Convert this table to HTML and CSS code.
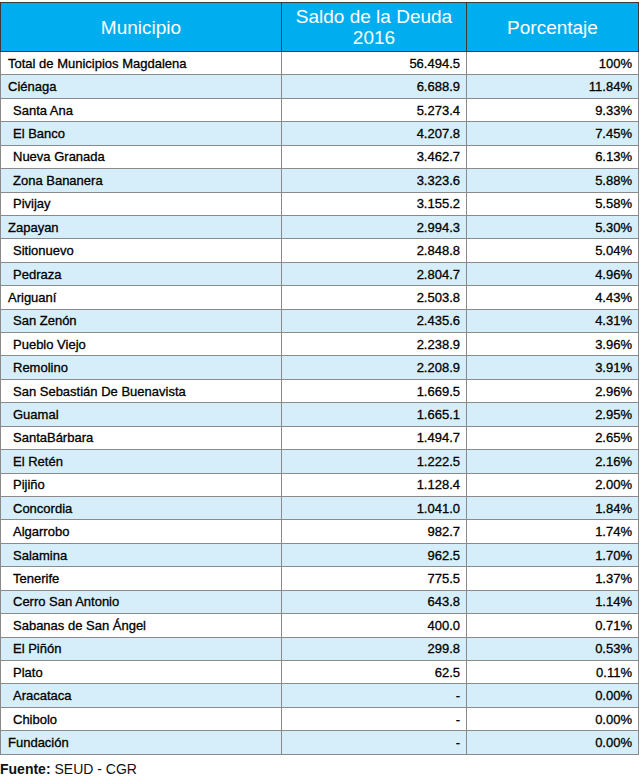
FILE: index.html
```html
<!DOCTYPE html>
<html lang="es">
<head>
<meta charset="utf-8">
<title>Saldo de la Deuda 2016 - Magdalena</title>
<link rel="stylesheet" href="styles.css">
</head>
<body>
<table class="deuda">
  <colgroup>
    <col class="c1"><col class="c2"><col class="c3">
  </colgroup>
  <thead>
    <tr><th>Municipio</th><th>Saldo de la Deuda<br>2016</th><th>Porcentaje</th></tr>
  </thead>
  <tbody>
    <tr><td class="n out">Total de Municipios Magdalena</td><td>56.494.5</td><td>100%</td></tr>
    <tr><td class="n out">Ciénaga</td><td>6.688.9</td><td>11.84%</td></tr>
    <tr><td class="n">Santa Ana</td><td>5.273.4</td><td>9.33%</td></tr>
    <tr><td class="n">El Banco</td><td>4.207.8</td><td>7.45%</td></tr>
    <tr><td class="n">Nueva Granada</td><td>3.462.7</td><td>6.13%</td></tr>
    <tr><td class="n">Zona Bananera</td><td>3.323.6</td><td>5.88%</td></tr>
    <tr><td class="n">Pivijay</td><td>3.155.2</td><td>5.58%</td></tr>
    <tr><td class="n out">Zapayan</td><td>2.994.3</td><td>5.30%</td></tr>
    <tr><td class="n">Sitionuevo</td><td>2.848.8</td><td>5.04%</td></tr>
    <tr><td class="n">Pedraza</td><td>2.804.7</td><td>4.96%</td></tr>
    <tr><td class="n out">Ariguaní</td><td>2.503.8</td><td>4.43%</td></tr>
    <tr><td class="n">San Zenón</td><td>2.435.6</td><td>4.31%</td></tr>
    <tr><td class="n">Pueblo Viejo</td><td>2.238.9</td><td>3.96%</td></tr>
    <tr><td class="n">Remolino</td><td>2.208.9</td><td>3.91%</td></tr>
    <tr><td class="n">San Sebastián De Buenavista</td><td>1.669.5</td><td>2.96%</td></tr>
    <tr><td class="n">Guamal</td><td>1.665.1</td><td>2.95%</td></tr>
    <tr><td class="n">SantaBárbara</td><td>1.494.7</td><td>2.65%</td></tr>
    <tr><td class="n">El Retén</td><td>1.222.5</td><td>2.16%</td></tr>
    <tr><td class="n">Pijiño</td><td>1.128.4</td><td>2.00%</td></tr>
    <tr><td class="n">Concordia</td><td>1.041.0</td><td>1.84%</td></tr>
    <tr><td class="n">Algarrobo</td><td>982.7</td><td>1.74%</td></tr>
    <tr><td class="n">Salamina</td><td>962.5</td><td>1.70%</td></tr>
    <tr><td class="n">Tenerife</td><td>775.5</td><td>1.37%</td></tr>
    <tr><td class="n">Cerro San Antonio</td><td>643.8</td><td>1.14%</td></tr>
    <tr><td class="n">Sabanas de San Ángel</td><td>400.0</td><td>0.71%</td></tr>
    <tr><td class="n">El Piñón</td><td>299.8</td><td>0.53%</td></tr>
    <tr><td class="n">Plato</td><td>62.5</td><td>0.11%</td></tr>
    <tr><td class="n">Aracataca</td><td>-</td><td>0.00%</td></tr>
    <tr><td class="n">Chibolo</td><td>-</td><td>0.00%</td></tr>
    <tr><td class="n out">Fundación</td><td>-</td><td>0.00%</td></tr>
  </tbody>
</table>
<p class="fuente"><b>Fuente:</b> SEUD - CGR</p>
</body>
</html>
```

FILE: styles.css
```css
html, body {
  margin: 0;
  padding: 0;
  background: #ffffff;
}
body {
  font-family: "Liberation Sans", Arial, Helvetica, sans-serif;
  color: #000000;
  padding-top: 2px;
}
.deuda {
  border-collapse: collapse;
  table-layout: fixed;
  width: 638px;
  border: 1px solid #444444;
}
.c1 { width: 281px; }
.c2 { width: 185px; }
.c3 { width: 172px; }
.deuda th {
  background: #00aeef;
  color: #ffffff;
  font-weight: normal;
  font-size: 19px;
  line-height: 21px;
  height: 48px;
  padding: 0;
  border: 1px solid #3a3a3a;
  text-align: center;
  vertical-align: middle;
}
.deuda td {
  height: 23.43px;
  padding: 0 6px 0 0;
  box-sizing: border-box;
  font-size: 13px;
  line-height: 15px;
  text-align: right;
  border: 1px solid #8a8a8a;
  vertical-align: middle;
  white-space: nowrap;
  -webkit-text-stroke: 0.3px #000000;
}
.deuda td.n {
  text-align: left;
  padding: 0 0 0 12px;
}
.deuda td.n.out {
  padding-left: 7px;
}
.deuda tbody tr:nth-child(even) td {
  background: #d5eef9;
}
.fuente {
  margin: 5px 0 0 0;
  font-size: 14px;
  line-height: 18px;
  color: #111111;
}
```
